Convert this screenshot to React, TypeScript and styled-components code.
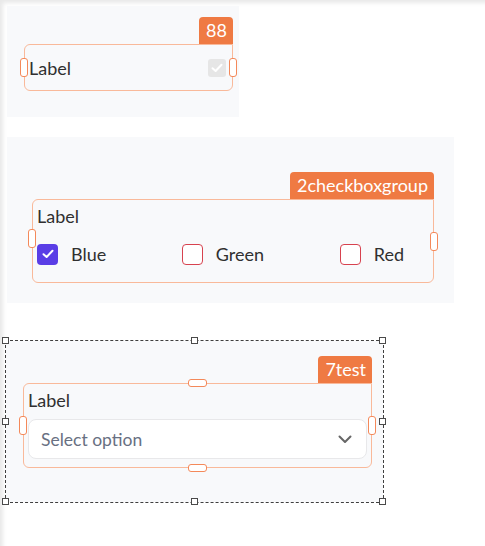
import React from "react";
import styled, { createGlobalStyle } from "styled-components";

const Global = createGlobalStyle`
  html, body { margin: 0; padding: 0; background: #fff; }
  body { font-family: "Lato", "Noto Sans", sans-serif; color: #333; }
  * { box-sizing: border-box; }
`;

const Page = styled.div`
  width: 485px;
  height: 546px;
  position: relative;
  overflow: hidden;
  padding: 6px 0 0 7px;
  background: #fff;
  box-shadow: inset 5px 5px 4px -2px rgba(0, 0, 0, 0.09);
`;

const Canvas = styled.div`
  display: flex;
  flex-direction: column;
  align-items: flex-start;
`;

const Panel = styled.div<{ $w: number; $h: number; $pt: number; $pl: number; $mt?: number }>`
  width: ${(p) => p.$w}px;
  height: ${(p) => p.$h}px;
  margin-top: ${(p) => p.$mt ?? 0}px;
  padding: ${(p) => p.$pt}px 0 0 ${(p) => p.$pl}px;
  background: #f8f9fb;
`;

const Selected = styled.div`
  position: relative;
  margin-left: -2px;
  margin-top: 37px;
  border: 1px dashed #3f3f3f;
`;

const Knob = styled.span<{ $x: string; $y: string }>`
  position: absolute;
  left: ${(p) => p.$x};
  top: ${(p) => p.$y};
  width: 7px;
  height: 7px;
  margin: -4px 0 0 -4px;
  background: #fff;
  border: 1px solid #4a4a4a;
`;

const Widget = styled.div<{ $w: number }>`
  width: ${(p) => p.$w}px;
  display: flex;
  flex-direction: column;
  align-items: flex-end;
`;

const Badge = styled.div`
  height: 27px;
  padding: 0 6px 0 7px;
  background: #ef7a43;
  color: #fff;
  font-size: 18px;
  line-height: 27px;
  border-radius: 4px 4px 0 0;
`;

const Box = styled.div<{ $h: number; $top?: boolean }>`
  position: relative;
  width: 100%;
  height: ${(p) => p.$h}px;
  border: 1px solid #f9b99a;
  border-radius: 6px;
  border-top-right-radius: 0;
  padding: ${(p) => (p.$top ? "6px 4px 0" : "0 4px")};
  display: flex;
  flex-direction: column;
  justify-content: ${(p) => (p.$top ? "flex-start" : "center")};
`;

const Handle = styled.span<{ $side: "left" | "right" | "top" | "bottom"; $off?: number }>`
  position: absolute;
  background: #fff;
  border: 1px solid #f4895a;
  border-radius: 3px;
  ${(p) =>
    p.$side === "left" || p.$side === "right"
      ? `width: 8px; height: 19px; top: 50%; margin-top: ${-10 + (p.$off ?? 0)}px; ${p.$side}: -5px;`
      : `height: 8px; width: 19px; left: 50%; margin-left: -10px; ${p.$side}: -5px;`}
`;

const Row = styled.div`
  display: flex;
  align-items: center;
  justify-content: space-between;
`;

const Label = styled.div`
  font-size: 18px;
  line-height: 20px;
  color: #303030;
`;

const DisabledCheck = styled.span`
  width: 18px;
  height: 18px;
  margin-right: 2px;
  border-radius: 3px;
  background: #e6e6e6;
  display: flex;
  align-items: center;
  justify-content: center;
`;

const Options = styled.div`
  display: flex;
  justify-content: space-between;
  padding-right: 25px;
  margin-top: 17px;
`;

const Option = styled.label`
  display: flex;
  align-items: center;
  gap: 13px;
  font-size: 18px;
  line-height: 22px;
  color: #303030;
`;

const Check = styled.span<{ $on?: boolean }>`
  width: 21px;
  height: 21px;
  border-radius: 4px;
  display: flex;
  align-items: center;
  justify-content: center;
  background: ${(p) => (p.$on ? "#5a3ee6" : "#fff")};
  border: ${(p) => (p.$on ? "none" : "1.5px solid #d7424f")};
`;

const Select = styled.div`
  margin-top: 9px;
  height: 40px;
  background: #fff;
  border: 1.5px solid #e8e8ea;
  border-radius: 8px;
  display: flex;
  align-items: center;
  justify-content: space-between;
  padding: 0 14px 0 12px;
  font-size: 17.5px;
  color: #687082;
`;

const Tick = ({ color }: { color: string }) => (
  <svg width="12" height="10" viewBox="0 0 12 10" fill="none">
    <path d="M1.5 5.2 L4.6 8 L10.5 1.8" stroke={color} strokeWidth="2" strokeLinecap="round" strokeLinejoin="round" />
  </svg>
);

export default function App() {
  return (
    <Page>
      <Global />
      <Canvas>
        <Panel $w={232} $h={111} $pt={11} $pl={17}>
          <Widget $w={209}>
            <Badge>88</Badge>
            <Box $h={47}>
              <Handle $side="left" />
              <Handle $side="right" />
              <Row>
                <Label>Label</Label>
                <DisabledCheck>
                  <Tick color="#fff" />
                </DisabledCheck>
              </Row>
            </Box>
          </Widget>
        </Panel>

        <Panel $w={447} $h={166} $pt={35} $pl={25} $mt={20}>
          <Widget $w={402}>
            <Badge>2checkboxgroup</Badge>
            <Box $h={84} $top>
              <Handle $side="left" $off={-2} />
              <Handle $side="right" $off={1} />
              <Label>Label</Label>
              <Options>
                <Option>
                  <Check $on>
                    <Tick color="#fff" />
                  </Check>
                  Blue
                </Option>
                <Option>
                  <Check />
                  Green
                </Option>
                <Option>
                  <Check />
                  Red
                </Option>
              </Options>
            </Box>
          </Widget>
        </Panel>

        <Selected>
          <Knob $x="0%" $y="0%" />
          <Knob $x="50%" $y="0%" />
          <Knob $x="100%" $y="0%" />
          <Knob $x="0%" $y="50%" />
          <Knob $x="100%" $y="50%" />
          <Knob $x="0%" $y="100%" />
          <Knob $x="50%" $y="100%" />
          <Knob $x="100%" $y="100%" />
          <Panel $w={377} $h={161} $pt={15} $pl={17}>
            <Widget $w={349}>
              <Badge>7test</Badge>
              <Box $h={85} $top>
                <Handle $side="top" />
                <Handle $side="bottom" />
                <Handle $side="left" />
                <Handle $side="right" />
                <Label>Label</Label>
                <Select>
                  <span>Select option</span>
                  <svg width="14" height="9" viewBox="0 0 14 9" fill="none">
                    <path d="M1.5 1.5 L7 7 L12.5 1.5" stroke="#666" strokeWidth="2" strokeLinecap="round" strokeLinejoin="round" />
                  </svg>
                </Select>
              </Box>
            </Widget>
          </Panel>
        </Selected>
      </Canvas>
    </Page>
  );
}
